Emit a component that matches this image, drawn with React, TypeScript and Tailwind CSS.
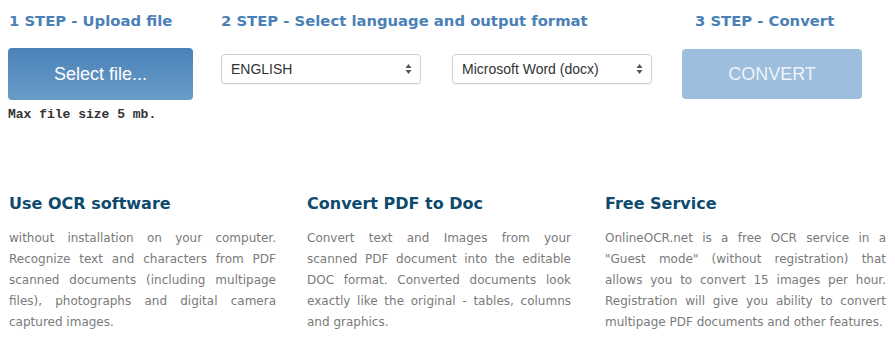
import React from "react";

const steps = {
  heading: "text-[14.8px] font-bold text-[#4a80b6] leading-[20px] whitespace-nowrap",
};

function SelectBox({ value }: { value: string }) {
  return (
    <div className="w-[200px] h-[30px] border border-[#cfcfcf] rounded-[4px] bg-white flex items-center justify-between pl-[9px] pr-[8px] shadow-[0_1px_1px_rgba(0,0,0,0.05)]">
      <span className="text-[14px] text-[#333] font-['Liberation_Sans',Arial,sans-serif]">{value}</span>
      <svg width="7" height="12" viewBox="0 0 7 12">
        <path d="M3.5 1 L6.5 5 L0.5 5 Z" fill="#555" />
        <path d="M3.5 11 L6.5 7 L0.5 7 Z" fill="#555" />
      </svg>
    </div>
  );
}

const features = [
  {
    title: "Use OCR software",
    text: "without installation on your computer. Recognize text and characters from PDF scanned documents (including multipage files), photographs and digital camera captured images.",
    width: "w-[267px]",
  },
  {
    title: "Convert PDF to Doc",
    text: "Convert text and Images from your scanned PDF document into the editable DOC format. Converted documents look exactly like the original - tables, columns and graphics.",
    width: "w-[264px] mr-[3px]",
  },
  {
    title: "Free Service",
    text: 'OnlineOCR.net is a free OCR service in a "Guest mode" (without registration) that allows you to convert 15 images per hour. Registration will give you ability to convert multipage PDF documents and other features.',
    width: "w-[281px]",
  },
];

export default function App() {
  return (
    <div className="w-[895px] h-[342px] bg-white overflow-hidden font-['DejaVu_Sans',Verdana,sans-serif]">
      {/* steps */}
      <div className="flex pt-[11px]">
        <div className="ml-[8px] w-[185px]">
          <h2 className={`${steps.heading} pl-[1px]`}>1 STEP - Upload file</h2>
          <button className="mt-[17px] w-[185px] h-[52px] rounded-[4px] bg-gradient-to-b from-[#4a82b8] to-[#6a9bc8] text-white text-[18px] font-['Liberation_Sans',Arial,sans-serif]">
            Select file...
          </button>
          <p className="mt-[6px] text-[13px] leading-[18px] font-bold text-[#333] font-['Liberation_Mono','Courier_New',monospace]">
            Max file size 5 mb.
          </p>
        </div>
        <div className="ml-[28px]">
          <h2 className={steps.heading}>2 STEP - Select language and output format</h2>
          <div className="mt-[23px] flex gap-[31px]">
            <SelectBox value="ENGLISH" />
            <SelectBox value="Microsoft Word (docx)" />
          </div>
        </div>
        <div className="ml-[30px] w-[180px] flex flex-col">
          <h2 className={`${steps.heading} pl-[13px]`}>3 STEP - Convert</h2>
          <button className="mt-[18px] w-[180px] h-[50px] rounded-[4px] bg-[#9dbedc] text-[#eef4fa] text-[18px] font-['Liberation_Sans',Arial,sans-serif]">
            CONVERT
          </button>
        </div>
      </div>

      {/* features */}
      <div className="flex mt-[69px] pl-[9px] gap-[31px]">
        {features.map((f) => (
          <div key={f.title} className={f.width}>
            <h3 className="text-[16px] font-bold text-[#0d4a6e] leading-[22px]">{f.title}</h3>
            <p className="mt-[13px] text-[12px] leading-[21px] text-[#7a7a7a] text-justify">{f.text}</p>
          </div>
        ))}
      </div>
    </div>
  );
}
